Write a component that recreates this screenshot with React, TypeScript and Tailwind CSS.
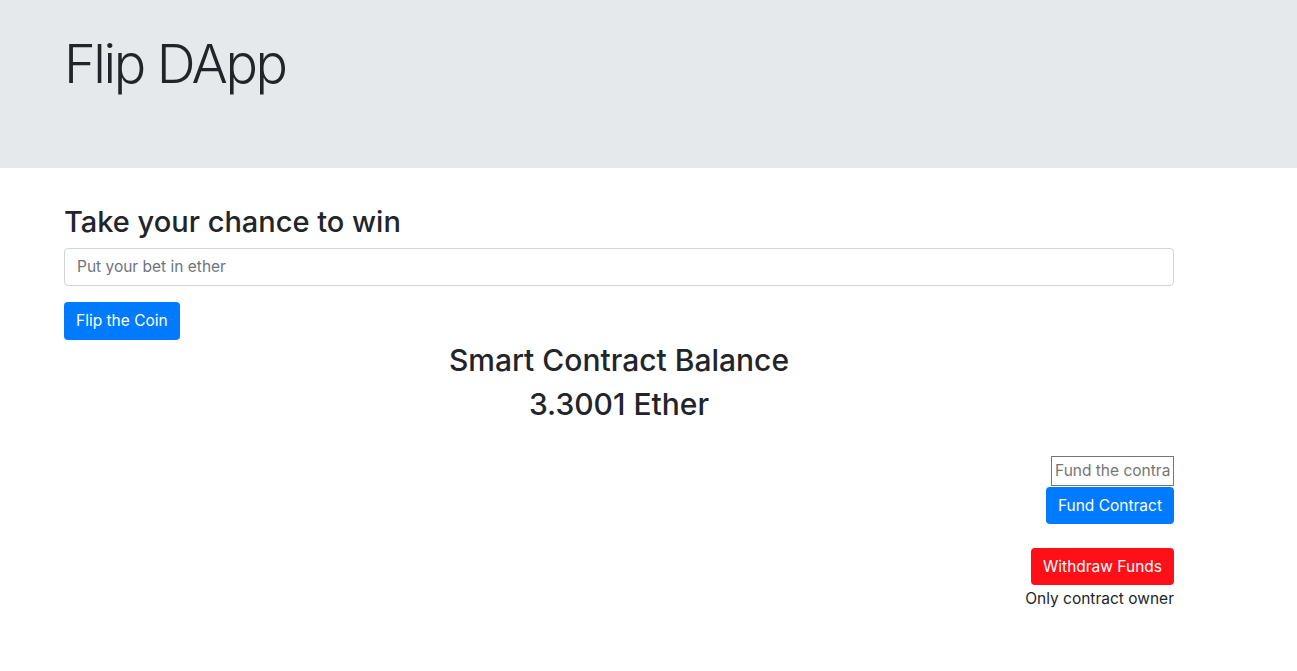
import React from "react";

export default function App() {
  const font = { fontFamily: "Inter, 'Liberation Sans', sans-serif" };
  return (
    <div className="min-h-[671px] bg-white text-[#212529]" style={font}>
      <div className="h-[168px] bg-[#e6e9ec]">
        <div className="ml-[49px] w-[1140px] px-[15px] pt-[32px]">
          <h1 className="text-[54px] font-light leading-[1.2] tracking-[-2.4px]">Flip DApp</h1>
        </div>
      </div>
      <div className="ml-[49px] w-[1140px] px-[15px] pt-[37px]">
        <h3 className="text-[29px] font-medium leading-[1.2] mb-[8px]">Take your chance to win</h3>
        <input
          className="block w-full h-[38px] px-[12px] border border-[#ced4da] rounded-[4px] text-[15.5px] placeholder-[#6c757d] outline-none"
          placeholder="Put your bet in ether"
        />
        <button className="mt-[16px] h-[38px] px-[12px] rounded-[4px] bg-[#007bff] text-white text-[15.5px]">
          Flip the Coin
        </button>
        <div className="text-center mt-[2px]">
          <h3 className="text-[30px] font-medium leading-[1.2] mb-[8px]">Smart Contract Balance</h3>
          <h3 className="text-[30px] font-medium leading-[1.2]">3.3001 Ether</h3>
        </div>
        <div className="flex flex-col items-end mt-[34px]">
          <input
            className="w-[123px] h-[30px] px-[3px] border border-[#767676] text-[15.5px] placeholder-[#757575] outline-none"
            placeholder="Fund the contract"
          />
          <button className="mt-[1px] h-[37px] px-[12px] rounded-[4px] bg-[#007bff] text-white text-[15.5px]">
            Fund Contract
          </button>
          <button className="mt-[24px] h-[37px] px-[12px] rounded-[4px] bg-[#ff0f17] text-white text-[15.5px]">
            Withdraw Funds
          </button>
          <div className="text-[15.5px] mt-[2px]">Only contract owner</div>
        </div>
      </div>
    </div>
  );
}
